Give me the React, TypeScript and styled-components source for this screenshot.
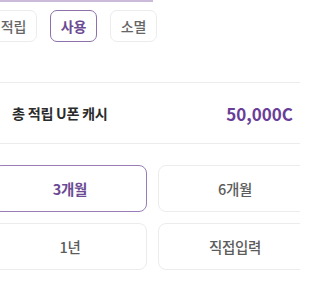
import styled, {createGlobalStyle} from "styled-components";
import {useState} from "react";

const GlobalStyle = createGlobalStyle`
  html, body {
    margin: 0;
    padding: 0;
    background: #ffffff;
    overflow: hidden;
  }
  body {
    font-family: "Noto Sans CJK KR", "Noto Sans", sans-serif;
    -webkit-font-smoothing: antialiased;
  }
`;

const Screen = styled.div`
  width: 300px;
  height: 300px;
  overflow: hidden;
  background: #ffffff;
`;

const TabIndicator = styled.div`
  width: 153px;
  height: 2px;
  background-color: #cbb9da;
`;

const FilterRow = styled.div`
  display: flex;
  gap: 13px;
  margin: 8px 0 0 -10px;
`;

const Pill = styled.button<{ $active?: boolean }>`
  width: 47px;
  height: 32px;
  box-sizing: border-box;
  border-radius: 7px;
  background: #ffffff;
  border: ${(p) => (p.$active ? "1.5px solid #8e70ab" : "1.5px solid #ececec")};
  color: ${(p) => (p.$active ? "#6c4a94" : "#666666")};
  font-family: inherit;
  font-size: 14px;
  font-weight: ${(p) => (p.$active ? 700 : 500)};
  padding: 0;
  letter-spacing: -0.2px;
`;

const SummaryRow = styled.div`
  display: flex;
  justify-content: space-between;
  align-items: center;
  height: 60px;
  margin-top: 40px;
  padding: 0 7px 0 12px;
  border-top: 1.5px solid #ececec;
  border-bottom: 1.5px solid #ececec;
`;

const Label = styled.span`
  font-size: 14.2px;
  font-weight: 600;
  color: #2b2b2b;
  letter-spacing: -0.3px;
`;

const Amount = styled.span`
  font-size: 17px;
  font-weight: 700;
  color: #6a3e98;
  letter-spacing: 0;
`;

const PeriodGrid = styled.div`
  display: grid;
  grid-template-columns: 154px 154px;
  grid-auto-rows: 47px;
  gap: 11px;
  margin: 21px 0 0 -7px;
`;

const PeriodButton = styled.button<{ $active?: boolean }>`
  box-sizing: border-box;
  border-radius: 8px;
  background: #ffffff;
  border: ${(p) => (p.$active ? "1.5px solid #9a7db6" : "1.5px solid #ececec")};
  color: ${(p) => (p.$active ? "#6c4a94" : "#5c5c5c")};
  font-family: inherit;
  font-size: 14.5px;
  font-weight: ${(p) => (p.$active ? 700 : 500)};
  padding: 0;
  letter-spacing: -0.3px;
`;

function App() {
    const [filter, setFilter] = useState("사용");
    const [period, setPeriod] = useState("3개월");
    return (
        <Screen>
            <GlobalStyle />
            <TabIndicator />
            <FilterRow>
                {["적립", "사용", "소멸"].map((f) => (
                    <Pill key={f} $active={f === filter} onClick={() => setFilter(f)}>{f}</Pill>
                ))}
            </FilterRow>
            <SummaryRow>
                <Label>총 적립 U폰 캐시</Label>
                <Amount>50,000C</Amount>
            </SummaryRow>
            <PeriodGrid>
                {["3개월", "6개월", "1년", "직접입력"].map((p) => (
                    <PeriodButton key={p} $active={p === period} onClick={() => setPeriod(p)}>{p}</PeriodButton>
                ))}
            </PeriodGrid>
        </Screen>
    );
}

export default App;
